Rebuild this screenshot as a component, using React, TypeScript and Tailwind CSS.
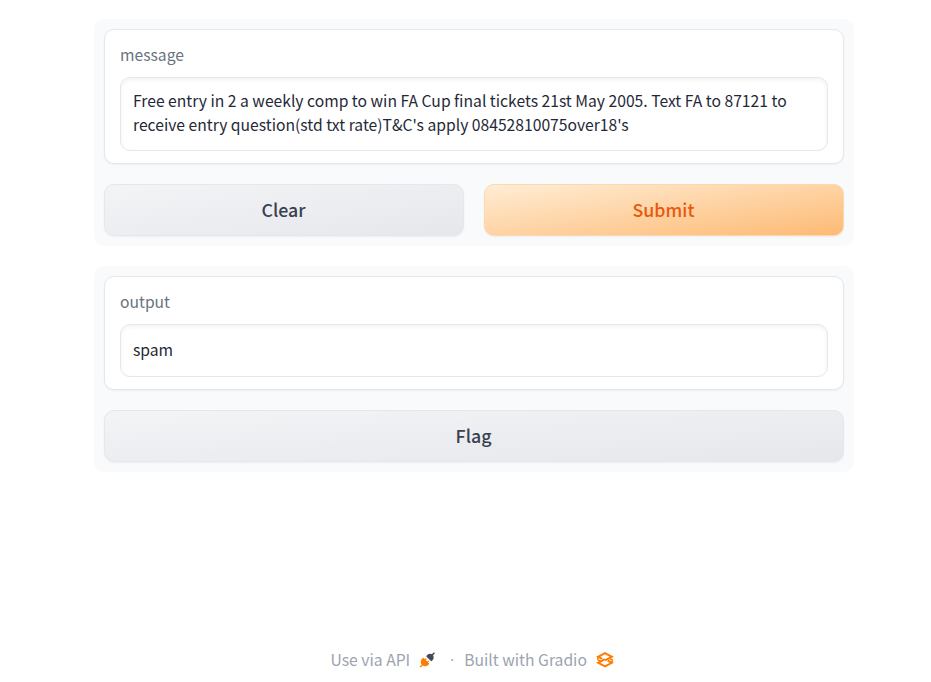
import React from "react";

function Panel({ children }: { children: React.ReactNode }) {
  return <section className="flex flex-col gap-5 rounded-[10px] bg-[#f9fafb] p-[10px]">{children}</section>;
}

function Field({ label, children }: { label: string; children: React.ReactNode }) {
  return (
    <div className="rounded-[10px] border border-gray-200 bg-white px-[15px] pt-[13px] pb-3 shadow-[0_1px_2px_0_rgba(0,0,0,0.05)]">
      <div className="mb-[10px] h-6 text-[15.66px] leading-6 text-[#6b7280]">{label}</div>
      <div className="rounded-[10px] border border-[#e5e7eb] bg-white px-3 text-[15.68px] leading-6 text-[#1f2937] shadow-[inset_0_2px_4px_0_rgba(0,0,0,0.05)]">
        {children}
      </div>
    </div>
  );
}

function Button({ label, primary = false }: { label: string; primary?: boolean }) {
  const tone = primary
    ? "border-[#fed7aa] bg-[linear-gradient(to_bottom_right,#ffedd5,#fdba74)] text-[#ea580c]"
    : "border-[#e5e7eb] bg-[linear-gradient(to_bottom_right,#f3f4f6,#e5e7eb)] text-[#374151]";
  return (
    <button
      className={`h-[52px] flex-1 rounded-[10px] border pr-[1px] pb-[2px] text-[17.8px] leading-[48px] font-medium shadow-[0_1px_2px_0_rgba(0,0,0,0.05)] ${tone}`}
    >
      {label}
    </button>
  );
}

function PlugIcon() {
  return (
    <svg className="ml-[9px] h-4 w-4 shrink-0" viewBox="0 0 16 16">
      <path d="M1.2 15.1 3 13.2" stroke="#ff7c00" strokeWidth="1.5" />
      <path d="M4.4 5.8 10.2 11.6C9.4 14.3 5.4 15.3 3 13.3.9 11 1.7 7 4.4 5.8Z" fill="#ff7c00" />
      <path d="m5.9 8 1.5-1.5M8.3 10.4l1.5-1.5" stroke="#ff7c00" strokeWidth="1.2" />
      <path d="M7.3 4.5C8.3 1.5 11.6.9 13.6 2.7c1.9 2.2 1 5.3-1.4 6.5Z" fill="#3f4b5c" />
      <path d="M13 3.2 15.4.8" stroke="#3f4b5c" strokeWidth="1.6" />
    </svg>
  );
}

function GradioIcon() {
  return (
    <svg className="ml-[9px] h-[18px] w-[18px] shrink-0" viewBox="0 0 18 18" fill="none" stroke="#ff7c00" strokeWidth="2">
      <path d="M6.2 7.9 2.2 5.8 9 2.2l6.8 3.6L9 9.4" />
      <path d="m11.8 9.7 4 2.1L9 15.4l-6.8-3.6L9 8.2" />
      <path d="M1.9 5.8v3l3.4 1.7M16.1 11.8v-3l-3.4-1.7" strokeWidth="1.5" />
    </svg>
  );
}

export default function App() {
  return (
    <div className="flex h-[682px] w-[931px] flex-col overflow-hidden bg-white pt-[19px] pb-[10px] font-['Source_Sans_Pro','Noto_Sans_CJK_SC',sans-serif]">
      <main className="ml-[94px] flex w-[760px] flex-col gap-5">
        <Panel>
          <Field label="message">
            <div className="h-[72px] pt-[11px]">
              Free entry in 2 a weekly comp to win FA Cup final tickets 21st May 2005. Text FA to 87121 to<br />
              receive entry question(std txt rate)T&amp;C's apply 08452810075over18's
            </div>
          </Field>
          <div className="flex gap-5">
            <Button label="Clear" />
            <Button label="Submit" primary />
          </div>
        </Panel>
        <Panel>
          <Field label="output">
            <div className="h-[51px] pt-[13px]">spam</div>
          </Field>
          <div className="flex">
            <Button label="Flag" />
          </div>
        </Panel>
      </main>
      <footer className="mt-auto ml-[330.5px] flex h-6 items-center text-[15.7px] leading-6 text-[#9ca3af]">
        <span>Use via API</span>
        <PlugIcon />
        <span className="mr-[8px] ml-[13px] w-2 text-center font-['Liberation_Sans',sans-serif]">·</span>
        <span>Built with Gradio</span>
        <GradioIcon />
      </footer>
    </div>
  );
}
